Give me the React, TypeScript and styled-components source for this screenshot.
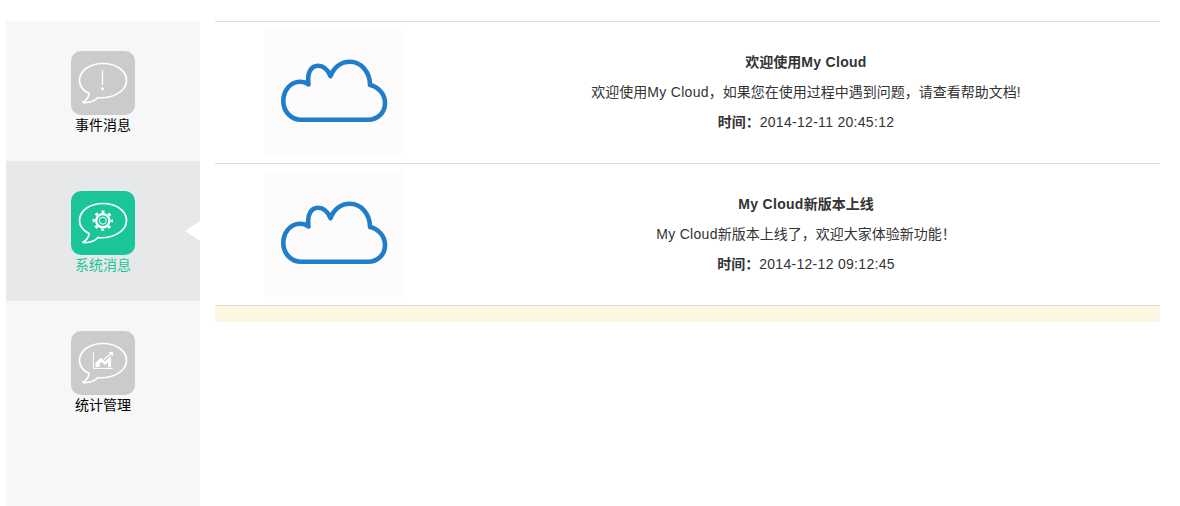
import React from "react";
import styled, { createGlobalStyle } from "styled-components";

const Global = createGlobalStyle`
  html, body { margin: 0; padding: 0; background: #fff; }
  body { font-family: "Liberation Sans", "Noto Sans CJK SC", sans-serif; font-size: 14px; color: #333; }
`;

const Page = styled.div`
  display: flex;
  align-items: flex-start;
  width: 1180px;
  height: 506px;
  padding: 21px 20px 0 6px;
  box-sizing: border-box;
  overflow: hidden;
`;

const Sidebar = styled.nav`
  flex: none;
  width: 194px;
  height: 485px;
  background: #f7f7f7;
  display: flex;
  flex-direction: column;
`;

const NavItem = styled.div<{ $active?: boolean }>`
  position: relative;
  height: 140px;
  padding-top: 30px;
  box-sizing: border-box;
  display: flex;
  flex-direction: column;
  align-items: center;
  background: ${(p) => (p.$active ? "#e6e8ea" : "transparent")};
  color: ${(p) => (p.$active ? "#1ac699" : "#000")};
  ${(p) =>
    p.$active
      ? `&::after {
          content: "";
          position: absolute;
          right: 0;
          top: 60px;
          border-style: solid;
          border-width: 10px 15px 10px 0;
          border-color: transparent #fff transparent transparent;
        }`
      : ""}
`;

const Tile = styled.div<{ $active?: boolean }>`
  width: 64px;
  height: 64px;
  border-radius: 10px;
  background: ${(p) => (p.$active ? "#1ac699" : "#cbcbcb")};
  svg { display: block; }
`;

const NavLabel = styled.span`
  margin-top: 2px;
  font-size: 14px;
  line-height: 16px;
`;

const Main = styled.main`
  flex: none;
  margin-left: 15px;
  width: 945px;
  display: flex;
  flex-direction: column;
`;

const Row = styled.article`
  height: 142px;
  box-sizing: border-box;
  border-top: 1px solid #dcdcdc;
  padding: 7px 0 0 49px;
  display: flex;
  align-items: flex-start;
`;

const Thumb = styled.div`
  flex: none;
  width: 140px;
  height: 126px;
  background: #fdfbfc;
  border-radius: 4px;
  svg { display: block; }
`;

const Body = styled.div`
  flex: none;
  margin-left: 48px;
  width: 708px;
  padding-top: 18px;
  text-align: center;
  line-height: 30px;
  font-size: 14px;
  color: #333;
`;

const Line = styled.div``;

const Strong = styled.strong`
  font-weight: 700;
`;

const Latin = styled.span`
  letter-spacing: 0.3px;
`;

const Notice = styled.div`
  height: 17px;
  border-top: 1px solid #dcdcdc;
  box-sizing: border-box;
  background: #fdf6e3;
`;

const Bubble = () => (
  <path
    d="M27 46.5C40 48 55.5 41 55.5 29.5C55.5 19.5 45 12.5 32 12.5C19 12.5 8.5 19.5 8.5 29.5C8.5 35 12 39.5 18 42.5C18 46 15 50 11.5 51.5C18 52 24 50 27 46.5Z"
    fill="none"
    stroke="#fff"
    strokeWidth="1.7"
  />
);

const AlertIcon = () => (
  <svg width="64" height="64" viewBox="0 0 64 64">
    <Bubble />
    <path d="M31.5 19V34" stroke="#fff" strokeWidth="1.3" />
    <circle cx="31.5" cy="37.8" r="1.5" fill="#fff" />
  </svg>
);

const GearIcon = () => (
  <svg width="64" height="64" viewBox="0 0 64 64" fill="none">
    <Bubble />
    <circle cx="31.8" cy="29.7" r="6.6" stroke="#fff" strokeWidth="2.2" />
    <circle cx="31.8" cy="29.7" r="9" stroke="#fff" strokeWidth="2.4" strokeDasharray="3 4.07" strokeDashoffset="1.5" />
    <circle cx="31.8" cy="29.7" r="3.5" stroke="#fff" strokeWidth="1" />
  </svg>
);

const ChartIcon = () => (
  <svg width="64" height="64" viewBox="0 0 64 64" fill="none">
    <Bubble />
    <path d="M22.4 21V37.4H41.8" stroke="#fff" strokeWidth="1" />
    <path d="M24.5 36V32L30 26.5L34 30.5L40 25V36H37V31L34.5 34L30 31L28.5 33V36Z" fill="#fff" />
    <path d="M33 28.5L40 22.5" stroke="#fff" strokeWidth="1.2" />
    <path d="M37.5 21H42V25.5Z" fill="#fff" />
  </svg>
);

const Cloud = () => (
  <svg width="140" height="126" viewBox="0 0 140 126" fill="none">
    <path
      d="M37.7 90.8H104C114 90.8 121 83.5 121 74C121 65 114.5 58 106 56C106 43 97 32.7 86 32.7C77 32.7 70 38.5 66.5 47C64 41 59.5 36.7 54 36.7C47 36.7 42.8 44 44.5 55.5C42 53.5 38 52.7 36 52.7C26 52.7 19.3 62 19.3 72C19.3 82.5 27 90.8 37.7 90.8Z"
      stroke="#1f7dc9"
      strokeWidth="4.6"
      strokeLinejoin="round"
    />
  </svg>
);

const navItems = [
  { label: "事件消息", icon: <AlertIcon /> },
  { label: "系统消息", icon: <GearIcon />, active: true },
  { label: "统计管理", icon: <ChartIcon /> },
];

const messages = [
  {
    title: "欢迎使用My Cloud",
    text: "欢迎使用My Cloud，如果您在使用过程中遇到问题，请查看帮助文档!",
    time: "2014-12-11 20:45:12",
  },
  {
    title: "My Cloud新版本上线",
    text: "My Cloud新版本上线了，欢迎大家体验新功能！",
    time: "2014-12-12 09:12:45",
  },
];

const Mixed = ({ text }: { text: string }) => (
  <>
    {text.split(/(My Cloud)/).map((part, i) =>
      part === "My Cloud" ? <Latin key={i}>{part}</Latin> : part
    )}
  </>
);

export default function App() {
  return (
    <>
      <Global />
      <Page>
        <Sidebar>
          {navItems.map((n) => (
            <NavItem key={n.label} $active={n.active}>
              <Tile $active={n.active}>{n.icon}</Tile>
              <NavLabel>{n.label}</NavLabel>
            </NavItem>
          ))}
        </Sidebar>
        <Main>
          {messages.map((m) => (
            <Row key={m.time}>
              <Thumb>
                <Cloud />
              </Thumb>
              <Body>
                <Line>
                  <Strong>
                    <Mixed text={m.title} />
                  </Strong>
                </Line>
                <Line>
                  <Mixed text={m.text} />
                </Line>
                <Line>
                  <Strong>时间：</Strong>
                  <Latin>{m.time}</Latin>
                </Line>
              </Body>
            </Row>
          ))}
          <Notice />
        </Main>
      </Page>
    </>
  );
}
